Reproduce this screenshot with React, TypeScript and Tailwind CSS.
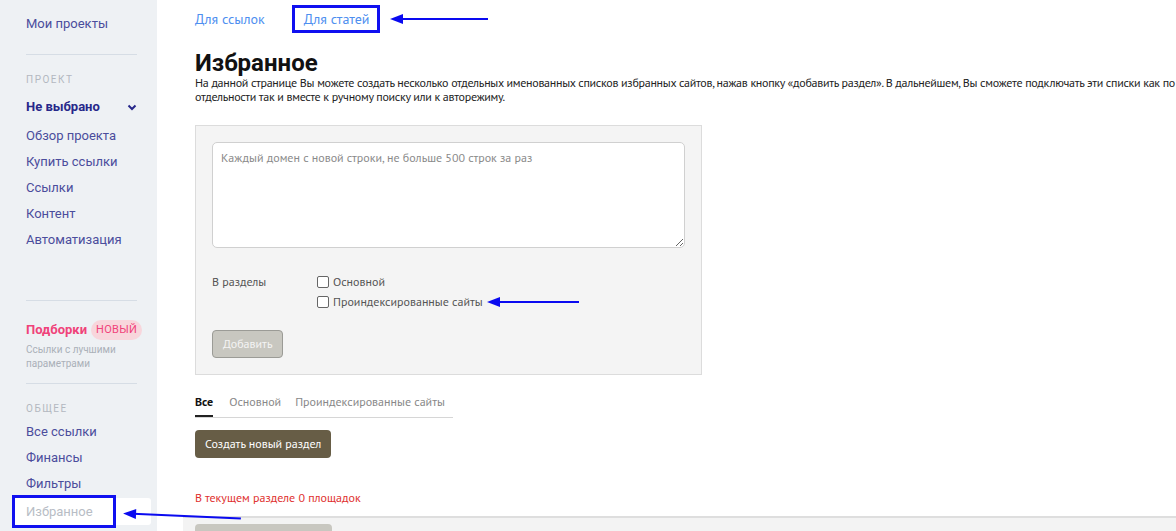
import React from "react";

const sideFont = { fontFamily: "Roboto, 'Noto Sans', sans-serif" };

function Arrow({ className, width }: { className: string; width: number }) {
  return (
    <svg
      className={`absolute pointer-events-none ${className}`}
      width={width}
      height="12"
      viewBox={`0 0 ${width} 12`}
    >
      <line x1="10" y1="6" x2={width} y2="6" stroke="#0a0af0" strokeWidth="2" />
      <polygon points="0,6 13,1 13,11" fill="#0a0af0" />
    </svg>
  );
}

function Sidebar() {
  const projectItems = ["Обзор проекта", "Купить ссылки", "Ссылки", "Контент", "Автоматизация"];
  const commonItems = ["Все ссылки", "Финансы", "Фильтры"];
  return (
    <aside
      className="w-[157px] shrink-0 bg-[#eef1f4] pl-[26px] pr-[20px] text-[13px] text-[#4b4d9c]"
      style={sideFont}
    >
      <div className="pt-[15px] h-[18px] box-content leading-[18px]">Мои проекты</div>
      <div className="mt-[21px] h-px bg-[#d6dde5]" />
      <div className="mt-[19px] text-[10px] tracking-[1.5px] text-[#b3b8c0] leading-[12px]">ПРОЕКТ</div>
      <div className="mt-[12px] flex items-center justify-between font-bold text-[#27288a] leading-[18px]">
        <span>Не выбрано</span>
        <svg width="10" height="7" viewBox="0 0 10 7">
          <path d="M1.5 1.5 L5 5 L8.5 1.5" stroke="#27288a" strokeWidth="2" fill="none" />
        </svg>
      </div>
      <div className="mt-[11px] flex flex-col gap-[8px] leading-[18px]">
        {projectItems.map((t) => (
          <div key={t}>{t}</div>
        ))}
      </div>
      <div className="mt-[51px] h-px bg-[#d6dde5]" />
      <div className="mt-[19px] flex items-center gap-[4px] leading-[20px]">
        <span className="font-bold text-[#f0437a]">Подборки</span>
        <span className="rounded-full bg-[#f8d6dc] px-[5px] text-[11px] text-[#f0437a] tracking-[0.3px]">НОВЫЙ</span>
      </div>
      <div className="mt-[3px] text-[10px] leading-[14px] text-[#aab0b8]">
        Ссылки с лучшими
        <br />
        параметрами
      </div>
      <div className="mt-[12px] h-px bg-[#d6dde5]" />
      <div className="mt-[19px] text-[10px] tracking-[1.5px] text-[#b3b8c0] leading-[12px]">ОБЩЕЕ</div>
      <div className="mt-[8px] flex flex-col gap-[8px] leading-[18px]">
        {commonItems.map((t) => (
          <div key={t}>{t}</div>
        ))}
      </div>
      <div className="relative -ml-[12px] -mr-[14px] mt-[5px] h-[27px] rounded-[3px] bg-white pl-[12px] leading-[27px] text-[#b8bdc5]">
        Избранное
        <div className="absolute left-[-2px] top-[-3px] h-[33px] w-[104px] border-[3px] border-[#1010f0]" />
      </div>
    </aside>
  );
}

function Main() {
  return (
    <main
      className="relative flex-1 text-[12px] text-[#222]"
      style={{ fontFamily: "'PT Sans', Roboto, 'Noto Sans', sans-serif" }}
    >
      <div className="pl-[38px]">
        <div className="flex items-center gap-[39px] pt-[10px] text-[14px] leading-[18px] text-[#4e8ff0]">
          <span>Для ссылок</span>
          <span className="relative">
            Для статей
            <span className="absolute left-[-12px] top-[-5px] h-[28px] w-[88px] border-[3px] border-[#1010f0]" />
          </span>
        </div>
        <h1 className="mt-[22px] text-[24px] font-bold leading-[26px] text-[#111]" style={{ fontFamily: "Roboto, sans-serif" }}>
          Избранное
        </h1>
        <p className="whitespace-nowrap leading-[14px] tracking-[-0.28px]">
          На данной странице Вы можете создать несколько отдельных именованных списков избранных сайтов, нажав кнопку «добавить раздел». В дальнейшем, Вы сможете подключать эти списки как по
          <br />
          отдельности так и вместе к ручному поиску или к авторежиму.
        </p>

        <div className="mt-[21px] w-[507px] border border-[#dcdcdc] bg-[#f4f4f4] px-[16px] pt-[16px] pb-[16px]">
          <textarea
            className="block h-[106px] w-full resize-y rounded-[5px] border border-[#d0d0d0] bg-white px-[8px] py-[6px] text-[12px] text-[#555] placeholder:text-[#8a8a8a] outline-none"
            placeholder="Каждый домен с новой строки, не больше 500 строк за раз"
          />
          <div className="mt-[24px] flex text-[#555] leading-[20px]">
            <div className="w-[105px]">В разделы</div>
            <div className="flex flex-col">
              {["Основной", "Проиндексированные сайты"].map((t) => (
                <label key={t} className="flex items-center gap-[4px]">
                  <span className="inline-block h-[12px] w-[12px] rounded-[2px] border border-[#666] bg-white" />
                  {t}
                </label>
              ))}
            </div>
          </div>
          <button className="mt-[18px] h-[28px] rounded-[4px] border border-[#9b9b96] bg-[#c8c7c0] px-[10px] text-[12px] text-[#f4f4f4]">
            Добавить
          </button>
        </div>

        <div className="mt-[19px] flex w-[258px] gap-[16px] border-b border-[#d6d6d6] leading-[16px] text-[#888]">
          <span className="border-b-2 border-[#222] pb-[5px] font-bold text-[#111]">Все</span>
          <span>Основной</span>
          <span className="-ml-[2px]">Проиндексированные сайты</span>
        </div>
        <button className="mt-[12px] h-[28px] rounded-[4px] bg-[#675d46] px-[10px] text-[12px] text-white">
          Создать новый раздел
        </button>
        <div className="mt-[32px] leading-[16px] text-[#e0302e]">В текущем разделе 0 площадок</div>
      </div>
      <div className="ml-[26px] mt-[10px] h-[40px] border-t-2 border-[#dedede] bg-[#f3f3f3] pl-[12px] pt-[6px]">
        <div className="h-[20px] w-[137px] rounded-[4px] bg-[#c8c7c0]" />
      </div>

      <Arrow className="left-[233px] top-[13px]" width={98} />
      <Arrow className="left-[330px] top-[296px]" width={92} />
    </main>
  );
}

export default function App() {
  return (
    <div className="relative flex h-[531px] w-[1176px] overflow-hidden bg-white">
      <Sidebar />
      <Main />
      <Arrow className="left-[123px] top-[510px] rotate-[2.5deg]" width={118} />
    </div>
  );
}
